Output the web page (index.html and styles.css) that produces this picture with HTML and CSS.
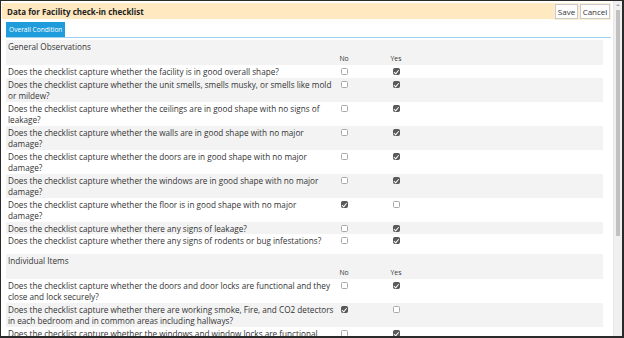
FILE: index.html
```html
<!DOCTYPE html>
<html lang="en">

<head>
    <meta charset="UTF-8">
    <meta name="viewport" content="width=device-width, initial-scale=1.0">
    <title>Facility check-in checklist</title>

    <link rel="stylesheet" href="styles.css">
</head>

<body>
    <div class="frame">
        <div class="main">
            <div class="titlebar">
                <h1>Data for Facility check-in checklist</h1>
                <div class="actions">
                    <button class="save">Save</button>
                    <button class="cancel">Cancel</button>
                </div>
            </div>

            <div class="tabs">
                <span class="tab">Overall Condition</span>
            </div>

            <div class="section">
                <div class="section-head">
                    <div class="section-title">General Observations</div>
                    <div class="cols"><span></span><span>No</span><span>Yes</span></div>
                </div>
                <div class="row">
                    <div class="q">Does the checklist capture whether the facility is in good overall shape?</div>
                    <span class="cb"></span><span class="cb on"></span>
                </div>
                <div class="row">
                    <div class="q">Does the checklist capture whether the unit smells, smells musky, or smells like mold<br>or mildew?</div>
                    <span class="cb"></span><span class="cb on"></span>
                </div>
                <div class="row">
                    <div class="q">Does the checklist capture whether the ceilings are in good shape with no signs of<br>leakage?</div>
                    <span class="cb"></span><span class="cb on"></span>
                </div>
                <div class="row">
                    <div class="q">Does the checklist capture whether the walls are in good shape with no major<br>damage?</div>
                    <span class="cb"></span><span class="cb on"></span>
                </div>
                <div class="row">
                    <div class="q">Does the checklist capture whether the doors are in good shape with no major<br>damage?</div>
                    <span class="cb"></span><span class="cb on"></span>
                </div>
                <div class="row">
                    <div class="q">Does the checklist capture whether the windows are in good shape with no major<br>damage?</div>
                    <span class="cb"></span><span class="cb on"></span>
                </div>
                <div class="row">
                    <div class="q">Does the checklist capture whether the floor is in good shape with no major<br>damage?</div>
                    <span class="cb on"></span><span class="cb"></span>
                </div>
                <div class="row">
                    <div class="q">Does the checklist capture whether there any signs of leakage?</div>
                    <span class="cb"></span><span class="cb on"></span>
                </div>
                <div class="row">
                    <div class="q">Does the checklist capture whether there any signs of rodents or bug infestations?</div>
                    <span class="cb"></span><span class="cb on"></span>
                </div>
            </div>

            <div class="section">
                <div class="section-head">
                    <div class="section-title">Individual Items</div>
                    <div class="cols"><span></span><span>No</span><span>Yes</span></div>
                </div>
                <div class="row">
                    <div class="q">Does the checklist capture whether the doors and door locks are functional and they<br>close and lock securely?</div>
                    <span class="cb"></span><span class="cb on"></span>
                </div>
                <div class="row">
                    <div class="q">Does the checklist capture whether there are working smoke, Fire, and CO2 detectors<br>in each bedroom and in common areas including hallways?</div>
                    <span class="cb on"></span><span class="cb"></span>
                </div>
                <div class="row">
                    <div class="q">Does the checklist capture whether the windows and window locks are functional<br>and secure?</div>
                    <span class="cb"></span><span class="cb on"></span>
                </div>
            </div>
        </div>

        <div class="scrollbar">
            <span class="arrow"></span>
            <div class="thumb"></div>
        </div>
    </div>
</body>

</html>
```

FILE: styles.css
```css
* {
    margin: 0;
    padding: 0;
    box-sizing: border-box;
}

body {
    background: #fff;
    font-family: "Open Sans", "Noto Sans", sans-serif;
    color: #333;
}

.frame {
    display: flex;
    width: 624px;
    height: 338px;
    border-style: solid;
    border-color: #2a2a2a;
    border-width: 1px 2px 2px 1px;
    overflow: hidden;
}

.main {
    flex: 1;
    padding: 2px 2px 0 1px;
    overflow: hidden;
}

/* header bar */

.titlebar {
    display: flex;
    align-items: center;
    justify-content: space-between;
    height: 16px;
    padding: 1px 1px 0 5px;
    background: #ffe9c0;
}

.titlebar h1 {
    font-size: 8px;
    font-weight: bold;
    color: #222;
}

.actions {
    display: flex;
    gap: 2px;
}

.actions button {
    height: 15px;
    font-family: inherit;
    font-size: 8px;
    color: #333;
    background: #fdfdfd;
    border: 1px solid #c9c9c9;
    box-shadow: 0 0 0 1px #fbeed2;
}

.actions .save {
    width: 23px;
}

.actions .cancel {
    width: 30px;
}

/* tabs */

.tabs {
    display: flex;
    margin: 3px 0 0 4px;
    border-bottom: 1.5px solid #9fd1ee;
}

.tab {
    height: 15px;
    padding: 0 3px;
    line-height: 15px;
    font-size: 6.6px;
    white-space: nowrap;
    color: #fff;
    background: #1e9cdc;
}

/* sections */

.section {
    margin: 2px 8px 7px 4px;
    font-size: 8.2px;
}

.section-head {
    padding: 1px 2px 0;
    background: #f3f3f3;
}

.section-title {
    height: 12px;
    line-height: 12px;
}

.cols,
.row {
    display: grid;
    grid-template-columns: 324px 24px 80px;
}

.cols {
    height: 12px;
    line-height: 12px;
    font-size: 6.8px;
    justify-items: center;
}

.cols span:first-child {
    justify-self: start;
}

.row {
    padding: 1px 2px 0;
    line-height: 11.5px;
}

.q {
    white-space: nowrap;
}

.row:nth-child(odd) {
    background: #f3f3f3;
}

.cb {
    position: relative;
    justify-self: center;
    align-self: start;
    width: 7px;
    height: 7px;
    margin-top: 2px;
    border: 1px solid #a9a9a9;
    border-radius: 1.5px;
    background: #fff;
}

.cb.on {
    border-color: #555;
    background: #5b5b5b;
}

.cb.on::after {
    content: "";
    position: absolute;
    left: 1.5px;
    top: 0;
    width: 1.6px;
    height: 3.5px;
    border: solid #fff;
    border-width: 0 1px 1px 0;
    transform: rotate(40deg);
}

/* scrollbar */

.scrollbar {
    position: relative;
    width: 9px;
    background: #f0f0f0;
    border-left: 1px solid #e8e8e8;
}

.arrow {
    display: block;
    width: 0;
    height: 0;
    margin: 3px auto 0;
    border-left: 2px solid transparent;
    border-right: 2px solid transparent;
    border-bottom: 2px solid #a3a3a3;
}

.thumb {
    width: 4px;
    height: 226px;
    margin: 4px auto 0;
    background: #c1c1c1;
}
```
